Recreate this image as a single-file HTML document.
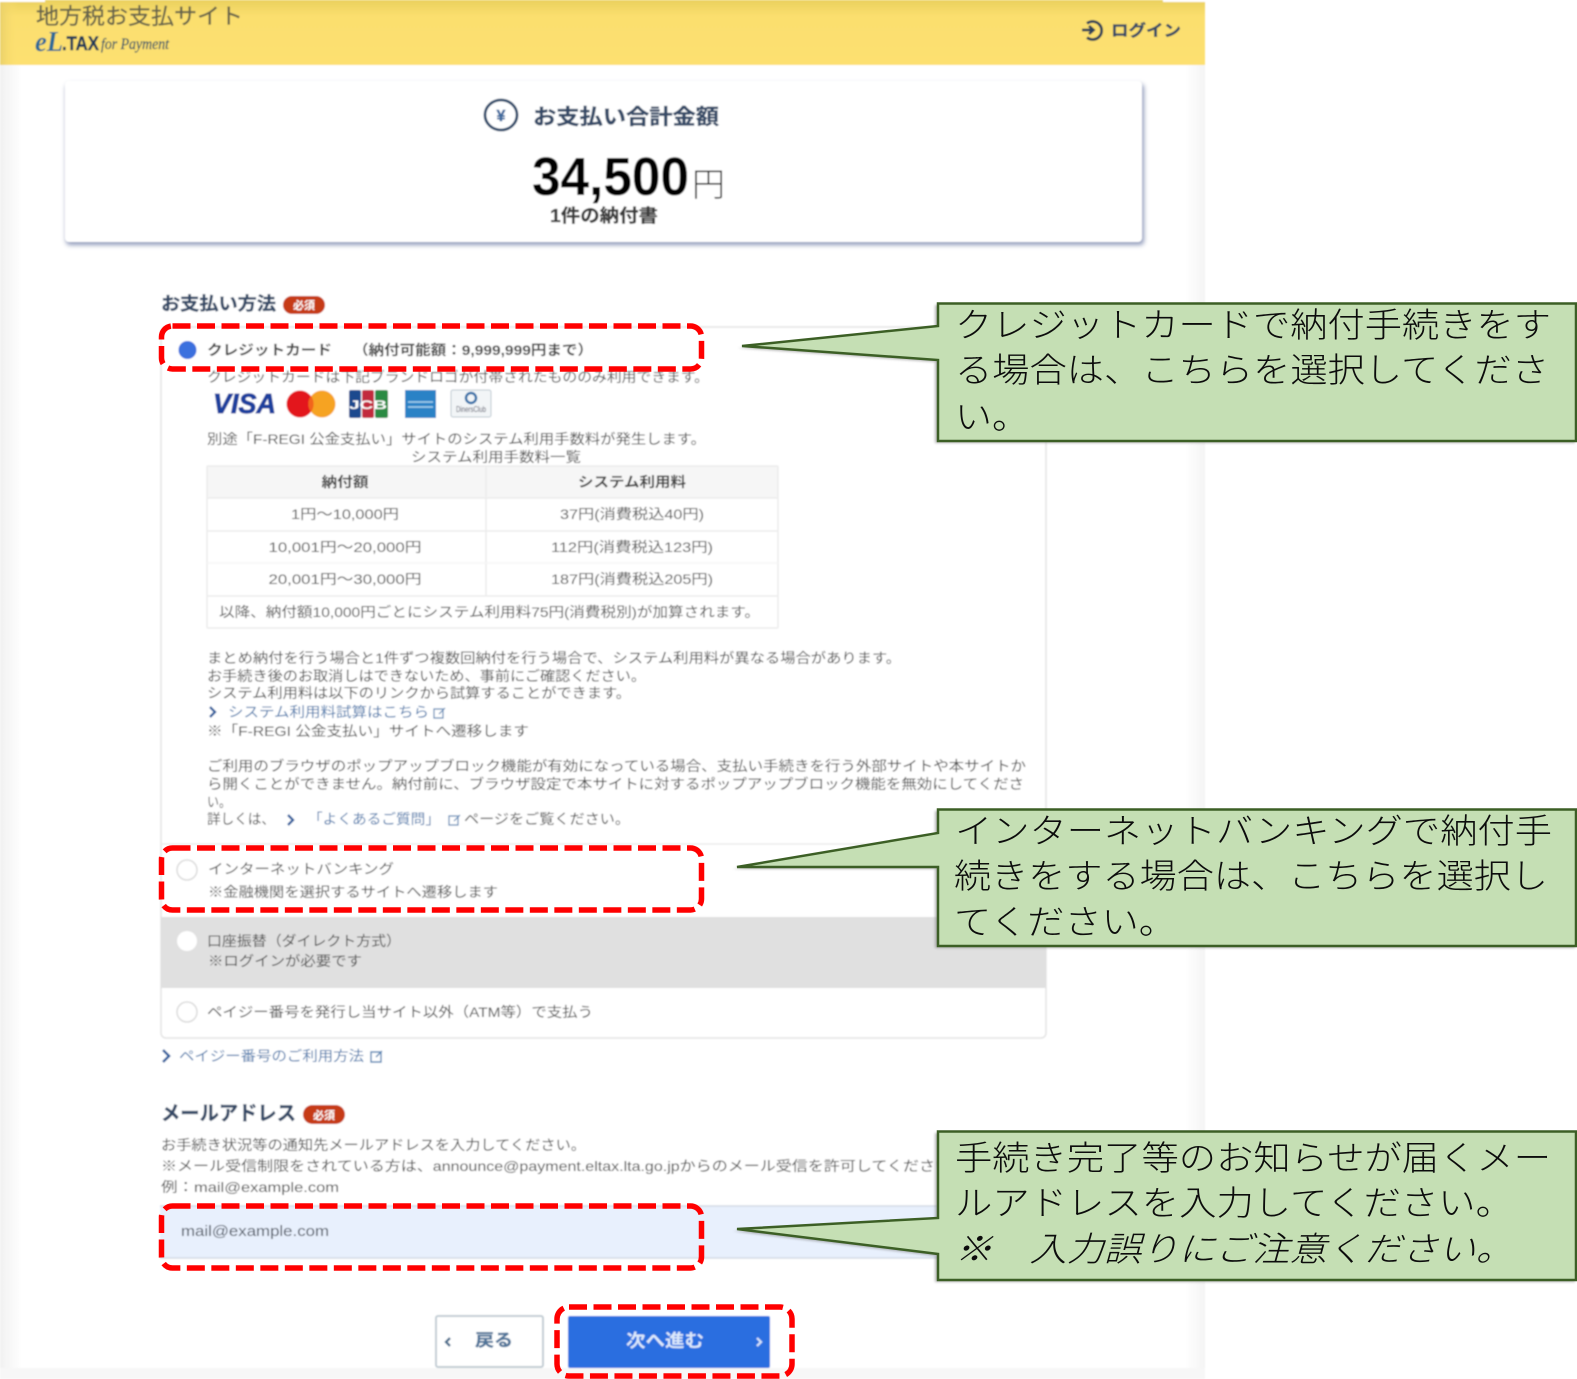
<!DOCTYPE html>
<html lang="ja">
<head>
<meta charset="utf-8">
<title>お支払い方法</title>
<style>
html,body{margin:0;padding:0;background:#fff;width:1577px;height:1379px;overflow:hidden}
svg{display:block;font-family:"Liberation Sans","Noto Sans CJK JP",sans-serif}
.b{font-weight:700}
.c{font-family:"Noto Sans CJK JP","WenQuanYi Zen Hei",sans-serif;font-weight:300;font-size:34px;fill:#0c0c0c}
.g{fill:#4f4f4f;font-size:14px}
.n{fill:#344a66;stroke:#344a66;stroke-width:.35px}
.l{fill:#4f7cae;font-size:14px}
</style>
</head>
<body>
<svg xmlns="http://www.w3.org/2000/svg" width="1577" height="1379" viewBox="0 0 1577 1379">
<defs>
<linearGradient id="hd" x1="0" y1="0" x2="0" y2="1"><stop offset="0" stop-color="#ead05e"/><stop offset=".25" stop-color="#fbdf6e"/><stop offset="1" stop-color="#fde06f"/></linearGradient>
<linearGradient id="hl" x1="0" y1="0" x2="1" y2="0"><stop offset="0" stop-color="#e9d06a"/><stop offset="1" stop-color="#fde06f" stop-opacity="0"/></linearGradient>
<linearGradient id="el" x1="0" y1="0" x2="1" y2="0"><stop offset="0" stop-color="#f1f1f1"/><stop offset="1" stop-color="#fff"/></linearGradient>
<linearGradient id="er" x1="0" y1="0" x2="1" y2="0"><stop offset="0" stop-color="#fff"/><stop offset="1" stop-color="#f4f4f4"/></linearGradient>
<filter id="bl" x="-2%" y="-2%" width="104%" height="104%"><feGaussianBlur stdDeviation=".85"/></filter>
<filter id="bs" x="-5%" y="-10%" width="110%" height="120%"><feGaussianBlur stdDeviation="2.5"/></filter>
<filter id="bc" x="-5%" y="-10%" width="110%" height="120%"><feGaussianBlur stdDeviation="1.2"/></filter>
</defs>

<g filter="url(#bl)">
  <rect x="0" y="0" width="1205" height="1379" fill="#fff"/>
  <rect x="0" y="65" width="22" height="1304" fill="url(#el)"/>
  <rect x="1185" y="65" width="20" height="1304" fill="url(#er)"/>
  <rect x="0" y="1368" width="1205" height="11" fill="#f7f7f7"/>

  <!-- header -->
  <rect x="0" y="0" width="1205" height="65" fill="url(#hd)"/>
  <rect x="0" y="0" width="18" height="65" fill="url(#hl)"/>
  <rect x="0" y="0" width="45" height="2" fill="#fff"/>
  <rect x="1163" y="0" width="42" height="2" fill="#fff"/>
  <text x="36" y="24" font-size="22" fill="#66644c" stroke="#66644c" stroke-width=".3" textLength="207" lengthAdjust="spacingAndGlyphs">地方税お支払サイト</text>
  <text x="35" y="51" font-family="Liberation Serif" font-style="italic" font-weight="700" font-size="28" fill="#2a6a96" textLength="28" lengthAdjust="spacingAndGlyphs">eL</text>
  <text x="62" y="50" class="b" font-size="19" fill="#1f3a58" stroke="#1f3a58" stroke-width=".4" textLength="37" lengthAdjust="spacingAndGlyphs">.TAX</text>
  <text x="101" y="49" font-family="Liberation Serif" font-style="italic" font-size="16" fill="#35566a" stroke="#35566a" stroke-width=".25" textLength="68" lengthAdjust="spacingAndGlyphs">for Payment</text>
  <g fill="none" stroke="#2c3f58" stroke-width="2.800">
    <path d="M1082 30h11M1089 26l4.500 4-4.500 4"/>
    <path d="M1087 23.500a9 9 0 1 1 0 14"/>
  </g>
  <text x="1111" y="36" class="b n" font-size="16" textLength="70" lengthAdjust="spacingAndGlyphs">ログイン</text>

  <!-- amount card -->
  <rect x="66" y="84" width="1078" height="161" rx="4" fill="#8f9aba" filter="url(#bs)"/>
  <rect x="65" y="81" width="1077" height="161" rx="4" fill="#fff"/>
  <ellipse cx="501" cy="115" rx="16" ry="15" fill="none" stroke="#2f4c6c" stroke-width="2.800"/>
  <text x="501" y="121" text-anchor="middle" class="b" font-size="16" fill="#3f6a9e" stroke="#3f6a9e" stroke-width=".5">¥</text>
  <text x="533" y="124" class="b n" font-size="21" textLength="186" lengthAdjust="spacingAndGlyphs">お支払い合計金額</text>
  <text x="532" y="195" class="b" font-size="54" fill="#000" textLength="157" lengthAdjust="spacingAndGlyphs">34,500</text>
  <text x="692" y="196" font-size="33" fill="#111" font-weight="300" textLength="33" lengthAdjust="spacingAndGlyphs">円</text>
  <text x="550" y="222" class="b" font-size="18" fill="#3a3a3a" stroke="#3a3a3a" stroke-width=".3" textLength="108" lengthAdjust="spacingAndGlyphs">1件の納付書</text>

  <!-- payment section -->
  <text x="161" y="310" class="b n" font-size="18" textLength="115" lengthAdjust="spacingAndGlyphs">お支払い方法</text>
  <rect x="283" y="296" width="42" height="18" rx="9" fill="#c63a12"/>
  <text x="304" y="309" text-anchor="middle" class="b" font-size="11" fill="#fff">必須</text>

  <rect x="161" y="327" width="885" height="711" rx="5" fill="#fff" stroke="#e4e4e4" stroke-width="1.500"/>

  <circle cx="187.500" cy="350" r="9" fill="#3a70de"/>
  <text x="207" y="355" class="b" font-size="14" fill="#444" textLength="125" lengthAdjust="spacingAndGlyphs">クレジットカード</text>
  <text x="353" y="355" class="b" font-size="14" fill="#444" textLength="240" lengthAdjust="spacingAndGlyphs">（納付可能額：9,999,999円まで）</text>
  <text x="207" y="382" class="g" textLength="502" lengthAdjust="spacingAndGlyphs">クレジットカードは下記ブランドロゴが付帯されたもののみ利用できます。</text>

  <!-- brand logos -->
  <text x="213" y="413" font-size="28" font-weight="700" font-style="italic" fill="#1f3f9d" stroke="#1f3f9d" stroke-width=".9" textLength="63" lengthAdjust="spacingAndGlyphs">VISA</text>
  <circle cx="300" cy="404" r="13.500" fill="#e3131b"/>
  <circle cx="322" cy="404" r="13.500" fill="#f6a322"/>
  <path d="M311 396a13.500 13.500 0 0 1 0 16a13.500 13.500 0 0 1 0-16z" fill="#f2651f"/>
  <rect x="349" y="390" width="12" height="28" rx="2" fill="#1c4a8e"/>
  <rect x="362" y="390" width="12" height="28" rx="2" fill="#c22a3c"/>
  <rect x="375" y="390" width="13" height="28" rx="2" fill="#2c8b43"/>
  <text x="368" y="409" text-anchor="middle" class="b" font-size="12" fill="#fff" textLength="38" lengthAdjust="spacingAndGlyphs">JCB</text>
  <rect x="405" y="390" width="31" height="28" fill="#2a82c6"/>
  <path d="M408 402h25M408 407h25" stroke="#a9d2ee" stroke-width="1.500"/>
  <rect x="451" y="390" width="40" height="27" rx="2" fill="#f2f5f7" stroke="#bcc7d0"/>
  <circle cx="471" cy="398" r="5" fill="none" stroke="#2f6fa8" stroke-width="2.500"/>
  <text x="471" y="412" text-anchor="middle" font-size="8" fill="#556" textLength="30" lengthAdjust="spacingAndGlyphs">DinersClub</text>

  <text x="207" y="444" class="g" textLength="499" lengthAdjust="spacingAndGlyphs">別途「F-REGI 公金支払い」サイトのシステム利用手数料が発生します。</text>
  <text x="411" y="462" class="g" textLength="170" lengthAdjust="spacingAndGlyphs">システム利用手数料一覧</text>

  <!-- table -->
  <rect x="207" y="466" width="571" height="32" fill="#f6f6f6"/>
  <g stroke="#ececec" stroke-width="1.500" fill="none">
    <path d="M207 466h571M207 498h571M207 531h571M207 596h571M207 466v162M778 466v162M486 466v130M207 628h571"/>
    <path d="M207 563h571" stroke="#f5f5f5"/>
  </g>
  <g font-size="14" fill="#555">
    <text x="345" y="487" text-anchor="middle" class="b" fill="#444" textLength="47" lengthAdjust="spacingAndGlyphs">納付額</text>
    <text x="632" y="487" text-anchor="middle" class="b" fill="#444" textLength="108" lengthAdjust="spacingAndGlyphs">システム利用料</text>
    <text x="345" y="519" text-anchor="middle" textLength="108" lengthAdjust="spacingAndGlyphs">1円～10,000円</text>
    <text x="632" y="519" text-anchor="middle" textLength="144" lengthAdjust="spacingAndGlyphs">37円(消費税込40円)</text>
    <text x="345" y="552" text-anchor="middle" textLength="153" lengthAdjust="spacingAndGlyphs">10,001円～20,000円</text>
    <text x="632" y="552" text-anchor="middle" textLength="162" lengthAdjust="spacingAndGlyphs">112円(消費税込123円)</text>
    <text x="345" y="584" text-anchor="middle" textLength="153" lengthAdjust="spacingAndGlyphs">20,001円～30,000円</text>
    <text x="632" y="584" text-anchor="middle" textLength="162" lengthAdjust="spacingAndGlyphs">187円(消費税込205円)</text>
    <text x="219" y="617" textLength="541" lengthAdjust="spacingAndGlyphs">以降、納付額10,000円ごとにシステム利用料75円(消費税別)が加算されます。</text>
  </g>

  <!-- notes -->
  <text x="207" y="663" class="g" textLength="694" lengthAdjust="spacingAndGlyphs">まとめ納付を行う場合と1件ずつ複数回納付を行う場合で、システム利用料が異なる場合があります。</text>
  <text x="207" y="681" class="g" textLength="439" lengthAdjust="spacingAndGlyphs">お手続き後のお取消しはできないため、事前にご確認ください。</text>
  <text x="207" y="698" class="g" textLength="424" lengthAdjust="spacingAndGlyphs">システム利用料は以下のリンクから試算することができます。</text>
  <path d="M210 707l5 5-5 5" fill="none" stroke="#2c5e9e" stroke-width="2.400"/>
  <text x="228" y="717" class="l" textLength="201" lengthAdjust="spacingAndGlyphs">システム利用料試算はこちら</text>
  <path d="M434 709h9v9h-9zM439 714l6-6" fill="none" stroke="#5b86b4" stroke-width="1.200"/>
  <text x="207" y="736" class="g" textLength="322" lengthAdjust="spacingAndGlyphs">※「F-REGI 公金支払い」サイトへ遷移します</text>
  <text x="207" y="771" class="g" textLength="819" lengthAdjust="spacingAndGlyphs">ご利用のブラウザのポップアップブロック機能が有効になっている場合、支払い手続きを行う外部サイトや本サイトか</text>
  <text x="207" y="789" class="g" textLength="817" lengthAdjust="spacingAndGlyphs">ら開くことができません。納付前に、ブラウザ設定で本サイトに対するポップアップブロック機能を無効にしてくださ</text>
  <text x="207" y="807" class="g" textLength="24" lengthAdjust="spacingAndGlyphs">い。</text>
  <text x="207" y="824" class="g" textLength="68" lengthAdjust="spacingAndGlyphs">詳しくは、</text>
  <path d="M288 815l5 5-5 5" fill="none" stroke="#2c5e9e" stroke-width="2.400"/>
  <text x="308" y="824" class="l" textLength="132" lengthAdjust="spacingAndGlyphs">「よくあるご質問」</text>
  <path d="M449 816h9v9h-9zM454 821l6-6" fill="none" stroke="#5b86b4" stroke-width="1.200"/>
  <text x="464" y="824" class="g" textLength="166" lengthAdjust="spacingAndGlyphs">ページをご覧ください。</text>
  <path d="M161 844h885" stroke="#ececec" stroke-width="1.500"/>

  <!-- other options -->
  <circle cx="187" cy="870" r="10" fill="#fff" stroke="#dcdcdc" stroke-width="1.500"/>
  <text x="208" y="874" class="g" textLength="186" lengthAdjust="spacingAndGlyphs">インターネットバンキング</text>
  <text x="208" y="897" class="g" textLength="290" lengthAdjust="spacingAndGlyphs">※金融機関を選択するサイトへ遷移します</text>

  <rect x="161" y="917" width="885" height="71" fill="#e0e0e0"/>
  <circle cx="187" cy="941" r="10" fill="#fff"/>
  <text x="207" y="946" class="g" textLength="194" lengthAdjust="spacingAndGlyphs">口座振替（ダイレクト方式）</text>
  <text x="208" y="966" class="g" textLength="154" lengthAdjust="spacingAndGlyphs">※ログインが必要です</text>

  <circle cx="187" cy="1012" r="10" fill="#fff" stroke="#dcdcdc" stroke-width="1.500"/>
  <text x="207" y="1017" class="g" textLength="386" lengthAdjust="spacingAndGlyphs">ペイジー番号を発行し当サイト以外（ATM等）で支払う</text>

  <path d="M163 1050l6 6-6 6" fill="none" stroke="#2c5e9e" stroke-width="2.600"/>
  <text x="179" y="1061" class="l" textLength="185" lengthAdjust="spacingAndGlyphs">ペイジー番号のご利用方法</text>
  <path d="M371 1052h10v10h-10zM376 1057l6-6" fill="none" stroke="#5b86b4" stroke-width="1.400"/>

  <!-- mail -->
  <text x="161" y="1120" class="b n" font-size="20" textLength="135" lengthAdjust="spacingAndGlyphs">メールアドレス</text>
  <rect x="303" y="1105" width="42" height="19" rx="9.500" fill="#c63a12"/>
  <text x="324" y="1119" text-anchor="middle" class="b" font-size="11" fill="#fff">必須</text>
  <text x="161" y="1150" class="g" textLength="425" lengthAdjust="spacingAndGlyphs">お手続き状況等の通知先メールアドレスを入力してください。</text>
  <text x="161" y="1171" class="g" textLength="806" lengthAdjust="spacingAndGlyphs">※メール受信制限をされている方は、announce@payment.eltax.lta.go.jpからのメール受信を許可してください。</text>
  <text x="161" y="1192" class="g" textLength="178" lengthAdjust="spacingAndGlyphs">例：mail@example.com</text>
  <rect x="160" y="1206" width="886" height="52" fill="#e8f0fd"/>
  <path d="M160 1206h886M160 1258h886" stroke="#d3dae6" stroke-width="1.500"/>
  <text x="181" y="1236" font-size="15" fill="#4f5763" textLength="148" lengthAdjust="spacingAndGlyphs">mail@example.com</text>

  <!-- buttons -->
  <rect x="436" y="1316" width="107" height="51" rx="2" fill="#fff" stroke="#c2cdd4" stroke-width="2"/>
  <path d="M450 1338l-4 4 4 4" fill="none" stroke="#4a6d8d" stroke-width="2.400"/>
  <text x="475" y="1346" class="b" font-size="17" fill="#4f7398" stroke="#4f7398" stroke-width=".3" textLength="38" lengthAdjust="spacingAndGlyphs">戻る</text>
  <rect x="568" y="1316" width="202" height="52" rx="2" fill="#2b6ee0"/>
  <text x="626" y="1347" class="b" font-size="18" fill="#dce8fb" textLength="78" lengthAdjust="spacingAndGlyphs">次へ進む</text>
  <path d="M757 1338l4 4-4 4" fill="none" stroke="#d5e3fa" stroke-width="2.200"/>
</g>

<!-- dashed highlight boxes -->
<g fill="none" stroke="#ff0000" stroke-width="5.500" stroke-dasharray="18 6.500">
  <rect x="161.500" y="326" width="540" height="43" rx="11"/>
  <rect x="161.500" y="848" width="540" height="62" rx="11"/>
  <rect x="161.500" y="1206" width="540" height="62" rx="11"/>
  <rect x="557" y="1307" width="235" height="69" rx="12"/>
</g>

<!-- callouts -->
<g fill="#7a7a7a" opacity=".55" filter="url(#bc)">
  <path d="M935 328V305H1575V443H935V362L738 348Z"/>
  <path d="M935 835V811H1575V948H935V869H733Z"/>
  <path d="M935 1220V1133H1575V1282H935V1256L733 1231Z"/>
</g>
<g fill="#c5dfb4" stroke="#3c5f25" stroke-width="2.500" stroke-linejoin="miter">
  <path d="M938 326V303.500H1576V441H938V360L742 346Z"/>
  <path d="M938 833V809.500H1576V946H938V867H737Z"/>
  <path d="M938 1218V1131.500H1576V1280H938V1254L737 1229Z"/>
</g>
<g class="c">
  <text class="c" x="955" y="337" textLength="596" lengthAdjust="spacingAndGlyphs">クレジットカードで納付手続きをす</text>
  <text class="c" x="955" y="382" textLength="594" lengthAdjust="spacingAndGlyphs">る場合は、こちらを選択してくださ</text>
  <text class="c" x="955" y="429" textLength="74" lengthAdjust="spacingAndGlyphs">い。</text>
  <text class="c" x="955" y="843" textLength="597" lengthAdjust="spacingAndGlyphs">インターネットバンキングで納付手</text>
  <text class="c" x="954" y="888" textLength="594" lengthAdjust="spacingAndGlyphs">続きをする場合は、こちらを選択し</text>
  <text class="c" x="954" y="934" textLength="222" lengthAdjust="spacingAndGlyphs">てください。</text>
  <text class="c" x="955" y="1170" textLength="596" lengthAdjust="spacingAndGlyphs">手続き完了等のお知らせが届くメー</text>
  <text class="c" x="955" y="1215" textLength="558" lengthAdjust="spacingAndGlyphs">ルアドレスを入力してください。</text>
  <text class="c" x="955" y="1261" font-style="italic" textLength="558" lengthAdjust="spacingAndGlyphs">※　入力誤りにご注意ください。</text>
</g>
</svg>
</body>
</html>
